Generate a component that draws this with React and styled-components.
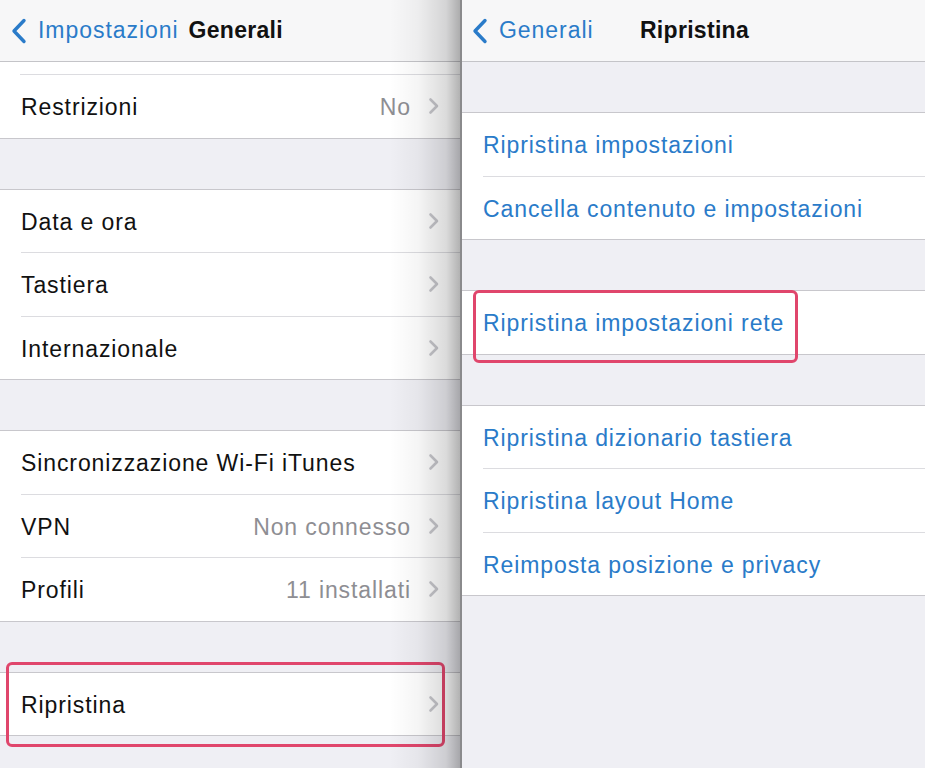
import React from "react";
import styled, { createGlobalStyle } from "styled-components";

const Global = createGlobalStyle`
  html, body { margin: 0; padding: 0; background: #efeff4; }
  body { font-family: "Liberation Sans", Arial, sans-serif; -webkit-font-smoothing: antialiased; }
  #root { width: 925px; height: 768px; overflow: hidden; }
`;

const Screen = styled.div`
  display: flex;
  width: 925px;
  height: 768px;
  background: #efeff4;
`;

const Panel = styled.div`
  position: relative;
  width: ${(p) => p.$w}px;
  flex: none;
  height: 768px;
  background: #efeff4;
  overflow: hidden;
  display: flex;
  flex-direction: column;
`;

const Shade = styled.div`
  position: absolute;
  top: 0;
  right: 0;
  width: 70px;
  height: 100%;
  pointer-events: none;
  background: linear-gradient(
    to right,
    rgba(0, 0, 0, 0) 0%,
    rgba(0, 0, 0, 0.04) 40%,
    rgba(0, 0, 0, 0.14) 80%,
    rgba(0, 0, 0, 0.3) 100%
  );
`;

const Divider = styled.div`
  width: 2px;
  flex: none;
  background: #8a8a8c;
`;

const NavBar = styled.div`
  height: 61px;
  flex: none;
  background: #f7f7f8;
  border-bottom: 1px solid #c4c4c8;
  display: flex;
  align-items: center;
  padding: 0 0 0 ${(p) => p.$pl}px;
  position: relative;
`;

const Back = styled.div`
  display: flex;
  align-items: center;
  gap: 11px;
  color: #2a7bc9;
  font-size: 23px;
  letter-spacing: 0.95px;
`;

const NavTitle = styled.div`
  font-size: 23px;
  font-weight: 700;
  color: #111;
  letter-spacing: 0.3px;
  margin-left: ${(p) => p.$ml || 0}px;
`;

const CenterTitle = styled(NavTitle)`
  position: absolute;
  left: 0;
  right: 0;
  text-align: center;
  padding-left: 2px;
`;

const Gap = styled.div`
  height: ${(p) => p.$h}px;
  flex: none;
`;

const Group = styled.div`
  background: #fff;
  border-top: ${(p) => (p.$noTop ? "none" : "1px solid #c8c7cc")};
  border-bottom: 1px solid #c8c7cc;
  flex: none;
`;

const Partial = styled.div`
  height: 12px;
  border-bottom: 1px solid #dcdce0;
  margin-left: 20px;
`;

const Row = styled.div`
  position: relative;
  height: 59.5px;
  display: flex;
  align-items: center;
  padding: 3px 20px 0 21px;
  font-size: 23px;
  letter-spacing: 0.9px;
  color: ${(p) => (p.$link ? "#2a7bc9" : "#111")};
  & + & {
    border-top: 1px solid transparent;
  }
  & + &::before {
    content: "";
    position: absolute;
    top: -1px;
    left: 21px;
    right: 0;
    height: 1px;
    background: #dcdce0;
  }
`;

const Label = styled.span`
  flex: 1;
  white-space: nowrap;
`;

const Value = styled.span`
  color: #8e8e93;
  margin-right: 17px;
  white-space: nowrap;
`;

const Highlight = styled.div`
  position: absolute;
  border: 3px solid #e0466c;
  border-radius: 6px;
  pointer-events: none;
  left: ${(p) => p.$l}px;
  right: ${(p) => p.$r}px;
  top: ${(p) => p.$t}px;
  bottom: ${(p) => p.$b}px;
`;

const ChevronIcon = styled.svg`
  flex: none;
  margin-top: -3px;
`;

const Chevron = () => (
  <ChevronIcon width="12" height="18" viewBox="0 0 12 18">
    <path d="M2.5 2.5 L9 9 L2.5 15.5" fill="none" stroke="#c7c7cc" strokeWidth="2.6" strokeLinecap="round" strokeLinejoin="round" />
  </ChevronIcon>
);

const BackChevron = () => (
  <svg width="16" height="26" viewBox="0 0 16 26" style={{ flex: "none" }}>
    <path d="M13 2.5 L3 13 L13 23.5" fill="none" stroke="#2a7bc9" strokeWidth="3.4" strokeLinecap="round" strokeLinejoin="round" />
  </svg>
);

const Item = ({ label, value, chevron = true, link, children }) => (
  <Row $link={link}>
    <Label>{label}</Label>
    {value && <Value>{value}</Value>}
    {chevron && <Chevron />}
    {children}
  </Row>
);

export default function App() {
  return (
    <Screen>
      <Global />
      <Panel $w={460}>
        <NavBar $pl={11}>
          <Back>
            <BackChevron />
            <span>Impostazioni</span>
          </Back>
          <NavTitle $ml={10}>Generali</NavTitle>
        </NavBar>
        <Group $noTop>
          <Partial />
          <Item label="Restrizioni" value="No" />
        </Group>
        <Gap $h={50} />
        <Group>
          <Item label="Data e ora" />
          <Item label="Tastiera" />
          <Item label="Internazionale" />
        </Group>
        <Gap $h={50} />
        <Group>
          <Item label="Sincronizzazione Wi-Fi iTunes" />
          <Item label="VPN" value="Non connesso" />
          <Item label="Profili" value="11 installati" />
        </Group>
        <Gap $h={50} />
        <Group>
          <Item label="Ripristina">
            <Highlight $l={6} $r={15} $t={-11} $b={-12} />
          </Item>
        </Group>
        <Shade />
      </Panel>
      <Divider />
      <Panel $w={463}>
        <NavBar $pl={10}>
          <Back>
            <BackChevron />
            <span>Generali</span>
          </Back>
          <CenterTitle>Ripristina</CenterTitle>
        </NavBar>
        <Gap $h={50} />
        <Group>
          <Item link chevron={false} label="Ripristina impostazioni" />
          <Item link chevron={false} label="Cancella contenuto e impostazioni" />
        </Group>
        <Gap $h={50} />
        <Group>
          <Item link chevron={false} label="Ripristina impostazioni rete">
            <Highlight $l={11} $r={127} $t={-1} $b={-9} />
          </Item>
        </Group>
        <Gap $h={50} />
        <Group>
          <Item link chevron={false} label="Ripristina dizionario tastiera" />
          <Item link chevron={false} label="Ripristina layout Home" />
          <Item link chevron={false} label="Reimposta posizione e privacy" />
        </Group>
      </Panel>
    </Screen>
  );
}
